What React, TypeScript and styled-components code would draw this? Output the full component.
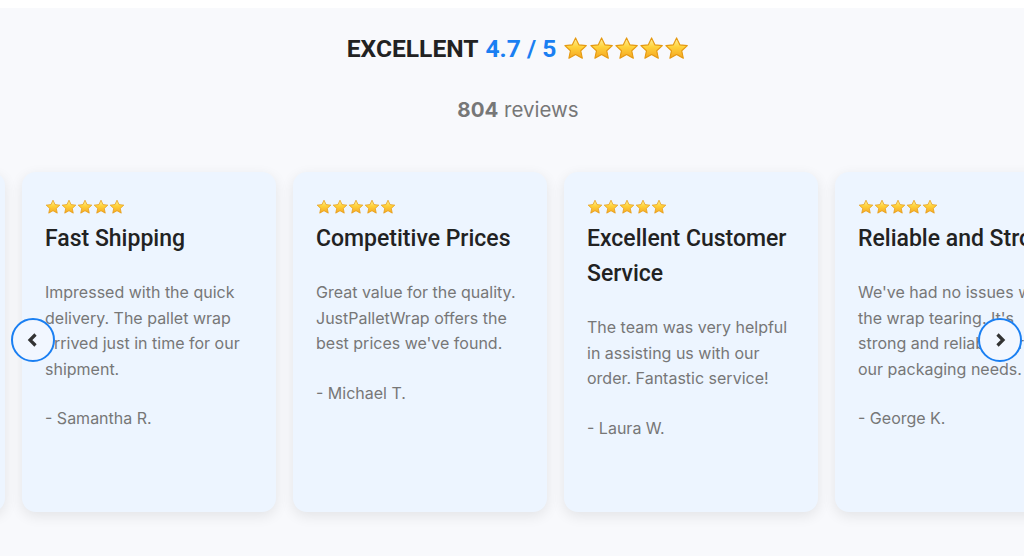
import React from "react";
import styled, { createGlobalStyle } from "styled-components";

const Global = createGlobalStyle`
  html, body { margin: 0; padding: 0; background: #ffffff; }
  body { font-family: Inter, "Noto Sans", sans-serif; overflow: hidden; }
`;

const Section = styled.section`
  margin-top: 8px;
  background: #f8f9fc;
  height: 548px;
  overflow: hidden;
  display: flex;
  flex-direction: column;
`;

const Header = styled.header`
  display: flex;
  flex-direction: column;
  align-items: center;
  padding-left: 12px;
`;

const Headline = styled.h2`
  margin: 24px 0 0;
  font-family: Roboto, "Liberation Sans", sans-serif;
  font-size: 24.6px;
  line-height: 34px;
  font-weight: 700;
  color: #222222;
  display: flex;
  align-items: center;
  gap: 7px;
`;

const Score = styled.span`
  color: #1a7ff2;
`;

const StarRow = styled.span<{ $size: number; $gap: number }>`
  display: inline-flex;
  gap: ${(p) => p.$gap}px;
  align-items: center;
  svg { width: ${(p) => p.$size}px; height: ${(p) => p.$size}px; display: block; }
`;

const Count = styled.p`
  margin: 32px 0 0;
  font-family: Inter, sans-serif;
  font-size: 20.5px;
  line-height: 24px;
  color: #777777;
  b { font-weight: 700; }
`;

const Viewport = styled.div`
  position: relative;
  width: 100%;
  margin-top: 50px;
  padding-bottom: 30px;
`;

const Track = styled.div`
  display: flex;
  gap: 17px;
  margin-left: -249px;
`;

const Card = styled.article`
  flex: 0 0 254px;
  height: 340px;
  box-sizing: border-box;
  background: #edf5ff;
  border-radius: 14px;
  box-shadow: 0 4px 14px rgba(0, 0, 0, 0.09);
  padding: 27px 23px;
`;

const Title = styled.h3`
  margin: 2px 0 0;
  font-family: Roboto, "Liberation Sans", sans-serif;
  font-size: 23px;
  line-height: 35px;
  font-weight: 500;
  color: #222222;
`;

const Body = styled.p`
  margin: 24px 0 0;
  font-family: Inter, sans-serif;
  font-size: 16px;
  line-height: 25.6px;
  color: #777777;
`;

const Author = styled(Body)`
  margin-top: 24px;
`;

const Arrow = styled.button<{ $side: "left" | "right" }>`
  position: absolute;
  top: 146px;
  ${(p) => (p.$side === "left" ? "left: 11px;" : "right: 2px;")}
  width: 44px;
  height: 44px;
  border-radius: 50%;
  border: 2px solid #1a7ff2;
  background: #f2f7ff;
  display: flex;
  align-items: center;
  justify-content: center;
  padding: 0;
  cursor: pointer;
  svg { width: 16px; height: 16px; display: block; }
`;

const Star = () => (
  <svg viewBox="0 0 24 24">
    <defs>
      <linearGradient id="sg" x1="0" y1="0" x2="0" y2="1">
        <stop offset="0" stopColor="#fff3a0" />
        <stop offset="0.45" stopColor="#ffd23a" />
        <stop offset="1" stopColor="#f5a623" />
      </linearGradient>
    </defs>
    <path
      d="M12 1.8l3.1 6.6 7.1.8-5.3 4.9 1.5 7.1L12 17.6l-6.4 3.6 1.5-7.1L1.8 9.2l7.1-.8z"
      fill="url(#sg)"
      stroke="#e59a12"
      strokeWidth="1.1"
      strokeLinejoin="round"
    />
  </svg>
);

const Stars = ({ size, gap }: { size: number; gap: number }) => (
  <StarRow $size={size} $gap={gap}>
    {[0, 1, 2, 3, 4].map((i) => (
      <Star key={i} />
    ))}
  </StarRow>
);

const reviews = [
  {
    title: "On-Time Delivery",
    body: "Our orders always arrive on schedule. Highly dependable supplier.",
    author: "- James P.",
  },
  {
    title: "Fast Shipping",
    body: "Impressed with the quick delivery. The pallet wrap arrived just in time for our shipment.",
    author: "- Samantha R.",
  },
  {
    title: "Competitive Prices",
    body: "Great value for the quality. JustPalletWrap offers the best prices we've found.",
    author: "- Michael T.",
  },
  {
    title: "Excellent Customer Service",
    body: "The team was very helpful in assisting us with our order. Fantastic service!",
    author: "- Laura W.",
  },
  {
    title: "Reliable and Strong",
    body: "We've had no issues with the wrap tearing. It's strong and reliable for all our packaging needs.",
    author: "- George K.",
  },
];

export default function App() {
  return (
    <>
      <Global />
      <Section>
        <Header>
          <Headline>
            EXCELLENT <Score>4.7 / 5</Score>
            <Stars size={25.2} gap={0} />
          </Headline>
          <Count>
            <b>804</b> reviews
          </Count>
        </Header>
        <Viewport>
          <Track>
            {reviews.map((r) => (
              <Card key={r.title}>
                <Stars size={16} gap={0} />
                <Title>{r.title}</Title>
                <Body>{r.body}</Body>
                <Author>{r.author}</Author>
              </Card>
            ))}
          </Track>
          <Arrow $side="left" aria-label="Previous">
            <svg viewBox="0 0 16 16">
              <path d="M10.5 2.5L5 8l5.5 5.5" fill="none" stroke="#333" strokeWidth="3.2" strokeLinejoin="miter" />
            </svg>
          </Arrow>
          <Arrow $side="right" aria-label="Next">
            <svg viewBox="0 0 16 16">
              <path d="M5.5 2.5L11 8l-5.5 5.5" fill="none" stroke="#333" strokeWidth="3.2" strokeLinejoin="miter" />
            </svg>
          </Arrow>
        </Viewport>
      </Section>
    </>
  );
}
